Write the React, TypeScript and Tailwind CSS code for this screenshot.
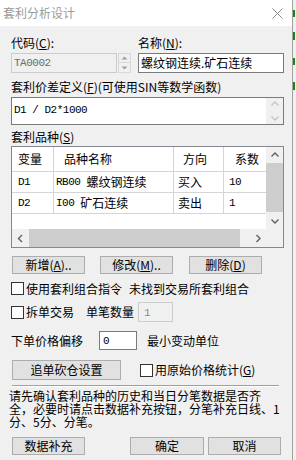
import React from "react";

const CJK = "font-['Noto_Sans_CJK_SC',sans-serif]";
const MONO = "font-['Liberation_Mono','Noto_Sans_CJK_SC',monospace] text-[11px] tracking-[-0.5px]";

function U({ c }: { c: string }) {
  return <span className="underline underline-offset-[1px]">{c}</span>;
}

function Btn({ w, children }: { w: string; children: React.ReactNode }) {
  return (
    <div
      className={`${w} h-[18px] border border-[#adadad] bg-[#e1e1e1] flex items-center justify-center text-[12px] leading-[12px] text-black`}
    >
      {children}
    </div>
  );
}

function Box() {
  return <div className="w-[13px] h-[13px] border border-[#333333] bg-white shrink-0" />;
}

function Chev({ dir, color }: { dir: "up" | "down" | "left" | "right"; color: string }) {
  const d = {
    up: "M1.5 5.5 L5 2 L8.5 5.5",
    down: "M1.5 2.5 L5 6 L8.5 2.5",
    left: "M6 1 L2.5 4.5 L6 8",
    right: "M3.5 1 L7 4.5 L3.5 8",
  }[dir];
  const vertical = dir === "up" || dir === "down";
  return (
    <svg width={vertical ? 10 : 9} height={vertical ? 8 : 9} viewBox={vertical ? "0 0 10 8" : "0 0 9 9"}>
      <path d={d} fill="none" stroke={color} strokeWidth="1.4" />
    </svg>
  );
}

function Tri({ up }: { up?: boolean }) {
  return (
    <svg width="7" height="4" viewBox="0 0 7 4">
      <path d={up ? "M0.5 3.5 L3.5 0.5 L6.5 3.5 Z" : "M0.5 0.5 L3.5 3.5 L6.5 0.5 Z"} fill="#a0a0a0" />
    </svg>
  );
}

export default function App() {
  const rows = [
    { v: "D1", code: "RB00", name: "螺纹钢连续", dir: "买入", k: "10" },
    { v: "D2", code: "I00", name: "矿石连续", dir: "卖出", k: "1" },
  ];
  return (
    <div className={`w-[296px] h-[460px] flex overflow-hidden ${CJK} text-[12px] text-black`}>
      {/* dialog window */}
      <div className="w-[293px] h-full flex flex-col border-r border-[#a0a0a0] bg-[#f0f0f0]">
        {/* title bar */}
        <div className="h-[26px] bg-white flex items-center justify-between pl-[3px] pr-[9px] shrink-0">
          <span className="text-[12px] leading-[14px] text-[#9a9a9a]">套利分析设计</span>
          <svg width="11" height="11" viewBox="0 0 11 11">
            <path d="M0.5 0.5 L10.5 10.5 M10.5 0.5 L0.5 10.5" stroke="#8a8a8a" strokeWidth="1" />
          </svg>
        </div>

        {/* body */}
        <div className="flex flex-col pl-[11px]">
          {/* labels */}
          <div className="mt-[10px] h-[14px] flex leading-[14px]">
            <div className="w-[127px]">
              代码(<U c="C" />):
            </div>
            <div>
              名称(<U c="N" />):
            </div>
          </div>
          {/* inputs */}
          <div className="mt-[3px] h-[20px] flex">
            <div className="w-[106px] h-[20px] border border-[#cccccc] bg-[#f0f0f0] flex items-center pl-[2px]">
              <span className={`${MONO} text-[#6d6d6d]`}>TA0002</span>
            </div>
            <div className="ml-[1px] w-[13px] h-[20px] flex flex-col">
              <div className="h-[10px] border border-[#d9d9d9] bg-[#f0f0f0] flex items-center justify-center">
                <Tri up />
              </div>
              <div className="h-[10px] border border-t-0 border-[#d9d9d9] bg-[#f0f0f0] flex items-center justify-center">
                <Tri />
              </div>
            </div>
            <div className="ml-[7px] w-[146px] h-[20px] border border-[#7a7a7a] bg-white flex items-center pl-[2px] leading-[14px]">
              螺纹钢连续.矿石连续
            </div>
          </div>

          {/* formula label */}
          <div className="mt-[7px] h-[14px] leading-[14px]">
            套利价差定义(<U c="F" />)(可使用SIN等数学函数)
          </div>
          {/* textarea */}
          <div className="mt-[3px] w-[273px] h-[28px] border border-[#7a7a7a] bg-white flex">
            <div className="flex-1 pl-[2px] pt-[3px] leading-[14px]">
              <span className={MONO}>D1 / D2*1000</span>
            </div>
            <div className="w-[17px] h-full bg-[#f0f0f0] flex flex-col items-center justify-between py-[2px]">
              <Chev dir="up" color="#c5c5c5" />
              <Chev dir="down" color="#c5c5c5" />
            </div>
          </div>

          {/* list label */}
          <div className="mt-[5px] h-[14px] leading-[14px]">
            套利品种(<U c="S" />)
          </div>
          {/* listbox */}
          <div className="mt-[2px] w-[273px] h-[102px] border border-[#828790] bg-white flex flex-col">
            <div className="h-[82px] flex">
              <div className="flex-1 flex flex-col">
                {/* header */}
                <div className="h-[25px] flex border-b border-[#d5d5d5] leading-[14px]">
                  <div className="w-[42px] border-r border-[#d5d5d5] flex items-center pl-[6px]">变量</div>
                  <div className="w-[120px] border-r border-[#d5d5d5] flex items-center pl-[10px]">品种名称</div>
                  <div className="w-[50px] border-r border-[#d5d5d5] flex items-center pl-[9px]">方向</div>
                  <div className="flex-1 flex items-center pl-[11px]">系数</div>
                </div>
                {rows.map((r) => (
                  <div key={r.v} className="h-[21px] flex border-b border-[#d5d5d5] leading-[14px]">
                    <div className="w-[42px] border-r border-[#d5d5d5] flex items-center pl-[6px]">
                      <span className={MONO}>{r.v}</span>
                    </div>
                    <div className="w-[120px] border-r border-[#d5d5d5] flex items-center pl-[2px]">
                      <span className={MONO}>{r.code}</span>
                      <span className="ml-[6px]">{r.name}</span>
                    </div>
                    <div className="w-[50px] border-r border-[#d5d5d5] flex items-center pl-[4px]">{r.dir}</div>
                    <div className="flex-1 flex items-center pl-[5px]">
                      <span className={MONO}>{r.k}</span>
                    </div>
                  </div>
                ))}
              </div>
              {/* vertical scrollbar */}
              <div className="w-[17px] h-full bg-[#f0f0f0] flex flex-col">
                <div className="h-[16px] flex items-center justify-center">
                  <Chev dir="up" color="#606060" />
                </div>
                <div className="h-[49px] bg-[#cdcdcd]" />
                <div className="flex-1 flex items-center justify-center">
                  <Chev dir="down" color="#606060" />
                </div>
              </div>
            </div>
            {/* horizontal scrollbar */}
            <div className="h-[18px] flex bg-[#f0f0f0]">
              <div className="w-[17px] flex items-center justify-center">
                <Chev dir="left" color="#606060" />
              </div>
              <div className="w-[211px] bg-[#cdcdcd]" />
              <div className="flex-1" />
              <div className="w-[17px] flex items-center justify-center">
                <Chev dir="right" color="#606060" />
              </div>
              <div className="w-[17px]" />
            </div>
          </div>

          {/* buttons row */}
          <div className="mt-[8px] flex pl-[1px]">
            <Btn w="w-[73px]">
              新增(<U c="A" />)..
            </Btn>
            <div className="ml-[15px]">
              <Btn w="w-[73px]">
                修改(<U c="M" />)..
              </Btn>
            </div>
            <div className="ml-[16px]">
              <Btn w="w-[73px]">
                删除(<U c="D" />)
              </Btn>
            </div>
          </div>

          {/* checkbox 1 */}
          <div className="mt-[8px] h-[13px] flex items-center leading-[14px]">
            <Box />
            <span className="ml-[2px]">使用套利组合指令</span>
            <span className="ml-[7px]">未找到交易所套利组合</span>
          </div>

          {/* checkbox 2 */}
          <div className="mt-[7px] h-[20px] flex items-center leading-[14px]">
            <Box />
            <span className="ml-[2px]">拆单交易</span>
            <span className="ml-[12px]">单笔数量</span>
            <div className="ml-[4px] w-[35px] h-[20px] border border-[#cccccc] bg-[#f0f0f0] pl-[5px] pt-[1px]">
              <span className={`${MONO} text-[#8a8a8a]`}>1</span>
            </div>
          </div>

          {/* price offset */}
          <div className="mt-[9px] h-[19px] flex items-center leading-[14px]">
            <span>下单价格偏移</span>
            <div className="ml-[16px] w-[38px] h-[19px] border border-[#7a7a7a] bg-white pl-[3px] flex items-center">
              <span className={MONO}>0</span>
            </div>
            <span className="ml-[10px]">最小变动单位</span>
          </div>

          {/* chase button + checkbox */}
          <div className="mt-[10px] h-[20px] flex items-center pl-[1px]">
            <div className="w-[109px] h-[20px] border border-[#adadad] bg-[#e1e1e1] flex items-center justify-center leading-[14px]">
              追单砍仓设置
            </div>
            <div className="ml-[19px] flex items-center leading-[14px]">
              <Box />
              <span className="ml-[2px]">
                用原始价格统计(<U c="G" />)
              </span>
            </div>
          </div>

          {/* separator */}
          <div className="mt-[5px] ml-[1px] w-[267px] h-[2px] border-t border-[#a0a0a0] border-b border-b-white" />

          {/* paragraph */}
          <div className="mt-[2px] -ml-[2px] w-[276px] h-[39px] leading-[13px] text-[12px] whitespace-nowrap">
            <div>请先确认套利品种的历史和当日分笔数据是否齐</div>
            <div>全，必要时请点击数据补充按钮，分笔补充日线、1</div>
            <div>分、5分、分笔。</div>
          </div>

          {/* bottom buttons */}
          <div className="mt-[9px] flex pl-[1px]">
            <Btn w="w-[73px]">数据补充</Btn>
            <div className="ml-[45px]">
              <Btn w="w-[74px]">确定</Btn>
            </div>
            <div className="ml-[4px]">
              <Btn w="w-[73px]">取消</Btn>
            </div>
          </div>
        </div>
      </div>

      {/* background app strip */}
      <div className="flex-1 h-full bg-[#f0f0f0] flex flex-col">
        <div className="mt-[10px] h-[7px] w-[2px] bg-[#108a10]" />
        <div className="mt-[15px] h-[8px] w-[2px] bg-[#108a10]" />
        <div className="mt-[18px] h-[7px] w-[2px] bg-[#108a10]" />
        <div className="mt-[17px] h-[8px] w-[2px] bg-[#108a10]" />
      </div>
    </div>
  );
}
